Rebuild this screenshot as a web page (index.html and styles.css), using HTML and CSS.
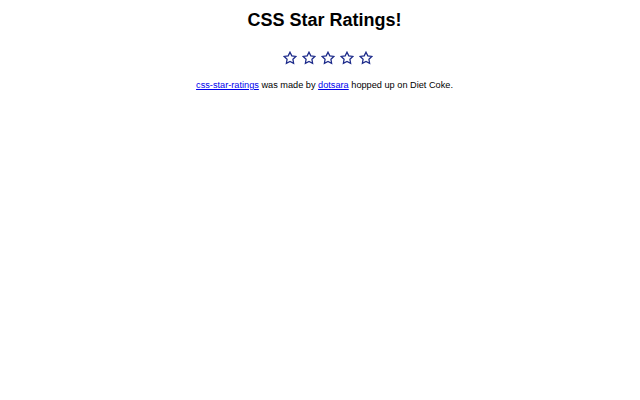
FILE: index.html
```html
<!DOCTYPE html>
<html lang="en">

<head>
    <meta charset="UTF-8">
    <meta name="viewport" content="width=device-width, initial-scale=1.0">
    <title>CSS Star Ratings</title>
    <link rel="stylesheet" href="styles.css">
</head>

<body>
    <h1>CSS Star Ratings!</h1>
    <div class="rating">
        <svg class="star" viewBox="0 0 24 24"><polygon points="12,2 15.09,8.26 22,9.27 17,14.14 18.18,21.02 12,17.77 5.82,21.02 7,14.14 2,9.27 8.91,8.26"/></svg>
        <svg class="star" viewBox="0 0 24 24"><polygon points="12,2 15.09,8.26 22,9.27 17,14.14 18.18,21.02 12,17.77 5.82,21.02 7,14.14 2,9.27 8.91,8.26"/></svg>
        <svg class="star" viewBox="0 0 24 24"><polygon points="12,2 15.09,8.26 22,9.27 17,14.14 18.18,21.02 12,17.77 5.82,21.02 7,14.14 2,9.27 8.91,8.26"/></svg>
        <svg class="star" viewBox="0 0 24 24"><polygon points="12,2 15.09,8.26 22,9.27 17,14.14 18.18,21.02 12,17.77 5.82,21.02 7,14.14 2,9.27 8.91,8.26"/></svg>
        <svg class="star" viewBox="0 0 24 24"><polygon points="12,2 15.09,8.26 22,9.27 17,14.14 18.18,21.02 12,17.77 5.82,21.02 7,14.14 2,9.27 8.91,8.26"/></svg>
    </div>
    <p class="credits">
        <a href="#">css-star-ratings</a> was made by <a href="#">dotsara</a> hopped up on Diet Coke.
    </p>
</body>

</html>
```

FILE: styles.css
```css
body {
    font-family: "Liberation Sans", Arial, sans-serif;
    text-align: center;
    margin: 10px 0 8px 9px;
}

h1 {
    font-size: 18px;
    margin: 0;
}

.rating {
    margin-top: 20px;
    padding-left: 7px;
    display: flex;
    justify-content: center;
    gap: 5px;
}

.star {
    width: 14px;
    height: 14px;
    fill: none;
    stroke: #1c2a8a;
    stroke-width: 2.2;
    stroke-linejoin: miter;
}

.credits {
    font-size: 9.2px;
    margin: 15px 0 0;
}

.credits a {
    color: #0000ee;
}
```
